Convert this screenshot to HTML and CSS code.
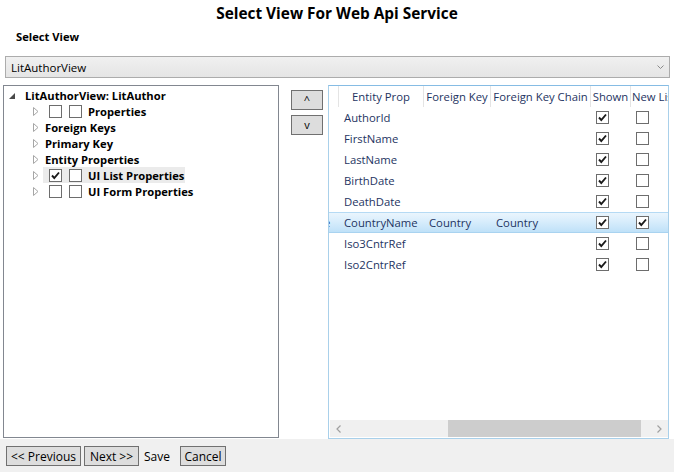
FILE: index.html
```html
<!DOCTYPE html>
<html>
<head>
<meta charset="utf-8">
<title>Select View For Web Api Service</title>
<link rel="stylesheet" href="styles.css">
</head>
<body>
<div class="app">
  <h1 class="title">Select View For Web Api Service</h1>
  <div class="section-label">Select View</div>
  <div class="combo">
    <span class="combo-text">LitAuthorView</span>
    <svg class="combo-arrow" width="7" height="4" viewBox="0 0 7 4"><polyline points="0.5,0.5 3.5,3.5 6.5,0.5" fill="none" stroke="#8a8a8a" stroke-width="1"/></svg>
  </div>
  <div class="main">
    <div class="tree">
      <div class="tree-row root">
        <span class="exp"><svg width="6" height="6" viewBox="0 0 6 6"><polygon points="6,0 6,6 0,6" fill="#4a4a4a"/></svg></span>
        <span class="node">LitAuthorView: LitAuthor</span>
      </div>
      <div class="tree-row child">
        <span class="exp"><svg width="6" height="9" viewBox="0 0 6 9"><polygon points="0.5,0.5 5,4.5 0.5,8.5" fill="none" stroke="#a6a6a6" stroke-width="1"/></svg></span>
        <span class="node"><span class="cb"></span><span class="cb"></span><span class="node-text">Properties</span></span>
      </div>
      <div class="tree-row child">
        <span class="exp"><svg width="6" height="9" viewBox="0 0 6 9"><polygon points="0.5,0.5 5,4.5 0.5,8.5" fill="none" stroke="#a6a6a6" stroke-width="1"/></svg></span>
        <span class="node">Foreign Keys</span>
      </div>
      <div class="tree-row child">
        <span class="exp"><svg width="6" height="9" viewBox="0 0 6 9"><polygon points="0.5,0.5 5,4.5 0.5,8.5" fill="none" stroke="#a6a6a6" stroke-width="1"/></svg></span>
        <span class="node">Primary Key</span>
      </div>
      <div class="tree-row child">
        <span class="exp"><svg width="6" height="9" viewBox="0 0 6 9"><polygon points="0.5,0.5 5,4.5 0.5,8.5" fill="none" stroke="#a6a6a6" stroke-width="1"/></svg></span>
        <span class="node">Entity Properties</span>
      </div>
      <div class="tree-row child">
        <span class="exp"><svg width="6" height="9" viewBox="0 0 6 9"><polygon points="0.5,0.5 5,4.5 0.5,8.5" fill="none" stroke="#a6a6a6" stroke-width="1"/></svg></span>
        <span class="node hover"><span class="cb checked"><svg width="11" height="11" viewBox="0 0 11 11"><polyline points="2,5.5 4.3,8 9,2.5" fill="none" stroke="#1a1a1a" stroke-width="1.9"/></svg></span><span class="cb"></span><span class="node-text">UI List Properties</span></span>
      </div>
      <div class="tree-row child">
        <span class="exp"><svg width="6" height="9" viewBox="0 0 6 9"><polygon points="0.5,0.5 5,4.5 0.5,8.5" fill="none" stroke="#a6a6a6" stroke-width="1"/></svg></span>
        <span class="node"><span class="cb"></span><span class="cb"></span><span class="node-text">UI Form Properties</span></span>
      </div>
    </div>
    <div class="movers">
      <button class="btn mover">^</button>
      <button class="btn mover">v</button>
    </div>
    <div class="grid">
      <div class="grid-head">
        <div class="rh"></div>
        <div class="hc c1">Entity Prop</div>
        <div class="hc c2">Foreign Key</div>
        <div class="hc c3">Foreign Key Chain</div>
        <div class="hc c4">Shown</div>
        <div class="hc c5">New List</div>
      </div>
      <div class="grid-body">
        <div class="grow"><div class="rh"></div><div class="gc c1">AuthorId</div><div class="gc c2"></div><div class="gc c3"></div><div class="gc c4"><span class="cb checked"><svg width="11" height="11" viewBox="0 0 11 11"><polyline points="2,5.5 4.3,8 9,2.5" fill="none" stroke="#1a1a1a" stroke-width="1.9"/></svg></span></div><div class="gc c5"><span class="cb"></span></div></div>
        <div class="grow"><div class="rh"></div><div class="gc c1">FirstName</div><div class="gc c2"></div><div class="gc c3"></div><div class="gc c4"><span class="cb checked"><svg width="11" height="11" viewBox="0 0 11 11"><polyline points="2,5.5 4.3,8 9,2.5" fill="none" stroke="#1a1a1a" stroke-width="1.9"/></svg></span></div><div class="gc c5"><span class="cb"></span></div></div>
        <div class="grow"><div class="rh"></div><div class="gc c1">LastName</div><div class="gc c2"></div><div class="gc c3"></div><div class="gc c4"><span class="cb checked"><svg width="11" height="11" viewBox="0 0 11 11"><polyline points="2,5.5 4.3,8 9,2.5" fill="none" stroke="#1a1a1a" stroke-width="1.9"/></svg></span></div><div class="gc c5"><span class="cb"></span></div></div>
        <div class="grow"><div class="rh"></div><div class="gc c1">BirthDate</div><div class="gc c2"></div><div class="gc c3"></div><div class="gc c4"><span class="cb checked"><svg width="11" height="11" viewBox="0 0 11 11"><polyline points="2,5.5 4.3,8 9,2.5" fill="none" stroke="#1a1a1a" stroke-width="1.9"/></svg></span></div><div class="gc c5"><span class="cb"></span></div></div>
        <div class="grow"><div class="rh"></div><div class="gc c1">DeathDate</div><div class="gc c2"></div><div class="gc c3"></div><div class="gc c4"><span class="cb checked"><svg width="11" height="11" viewBox="0 0 11 11"><polyline points="2,5.5 4.3,8 9,2.5" fill="none" stroke="#1a1a1a" stroke-width="1.9"/></svg></span></div><div class="gc c5"><span class="cb"></span></div></div>
        <div class="grow selected"><div class="rh"><span class="rh-mark">e</span></div><div class="gc c1">CountryName</div><div class="gc c2">Country</div><div class="gc c3">Country</div><div class="gc c4"><span class="cb checked"><svg width="11" height="11" viewBox="0 0 11 11"><polyline points="2,5.5 4.3,8 9,2.5" fill="none" stroke="#1a1a1a" stroke-width="1.9"/></svg></span></div><div class="gc c5"><span class="cb checked"><svg width="11" height="11" viewBox="0 0 11 11"><polyline points="2,5.5 4.3,8 9,2.5" fill="none" stroke="#1a1a1a" stroke-width="1.9"/></svg></span></div></div>
        <div class="grow"><div class="rh"></div><div class="gc c1">Iso3CntrRef</div><div class="gc c2"></div><div class="gc c3"></div><div class="gc c4"><span class="cb checked"><svg width="11" height="11" viewBox="0 0 11 11"><polyline points="2,5.5 4.3,8 9,2.5" fill="none" stroke="#1a1a1a" stroke-width="1.9"/></svg></span></div><div class="gc c5"><span class="cb"></span></div></div>
        <div class="grow"><div class="rh"></div><div class="gc c1">Iso2CntrRef</div><div class="gc c2"></div><div class="gc c3"></div><div class="gc c4"><span class="cb checked"><svg width="11" height="11" viewBox="0 0 11 11"><polyline points="2,5.5 4.3,8 9,2.5" fill="none" stroke="#1a1a1a" stroke-width="1.9"/></svg></span></div><div class="gc c5"><span class="cb"></span></div></div>
      </div>
      <div class="hscroll">
        <span class="sb-btn"><svg width="5" height="8" viewBox="0 0 5 8"><polyline points="4.5,0.5 1,4 4.5,7.5" fill="none" stroke="#a0a0a0" stroke-width="1.2"/></svg></span>
        <span class="sb-track"><span class="sb-thumb"></span></span>
        <span class="sb-btn"><svg width="5" height="8" viewBox="0 0 5 8"><polyline points="0.5,0.5 4,4 0.5,7.5" fill="none" stroke="#a0a0a0" stroke-width="1.2"/></svg></span>
      </div>
    </div>
  </div>
  <div class="footer">
    <button class="btn fbtn prev">&lt;&lt; Previous</button>
    <button class="btn fbtn next">Next &gt;&gt;</button>
    <span class="save">Save</span>
    <button class="btn fbtn cancel">Cancel</button>
  </div>
</div>
</body>
</html>
```

FILE: styles.css
```css
* { box-sizing: border-box; }
html, body { margin: 0; padding: 0; }
body {
  font-family: "Open Sans", "Noto Sans", sans-serif;
  font-size: 11.5px;
  color: #000;
  background: #fff;
}
.app {
  width: 674px;
  height: 472px;
  display: flex;
  flex-direction: column;
  overflow: hidden;
}
.title {
  margin: 0;
  height: 29px;
  line-height: 28px;
  font-size: 15.4px;
  font-weight: 700;
  text-align: center;
}
.section-label {
  height: 16px;
  line-height: 16px;
  font-size: 11.2px;
  font-weight: 700;
  padding-left: 16px;
}
.combo {
  margin: 11px 4px 0 5px;
  height: 22px;
  border: 1px solid #acacac;
  background: linear-gradient(#f0f0f0, #e5e5e5);
  display: flex;
  align-items: center;
  justify-content: space-between;
  padding: 0 5px 0 5px;
}
.combo-arrow { display: block; }
.main {
  margin-top: 7px;
  height: 354px;
  display: flex;
}
.tree {
  margin-left: 3px;
  width: 276px;
  height: 353px;
  border: 1px solid #828790;
  padding-top: 1px;
  font-size: 11.2px;
  font-weight: 700;
}
.tree-row {
  height: 16px;
  display: flex;
  align-items: center;
}
.tree-row.root { padding-left: 5px; }
.tree-row.root .exp { width: 14px; padding-top: 1px; }
.tree-row.child { padding-left: 29px; }
.tree-row.child .exp { width: 10px; }
.exp { display: flex; align-items: center; }
.exp svg { display: block; }
.node {
  display: flex;
  align-items: center;
  height: 16px;
  padding: 0 1px 0 2px;
  white-space: nowrap;
}
.node.hover { background: #ebebeb; }
.node .cb { margin-left: 4px; }
.node .cb + .cb { margin-left: 7px; }
.node-text { margin-left: 6px; }
.cb {
  width: 13px;
  height: 13px;
  border: 1px solid #6d6d6d;
  background: #fff;
  display: inline-flex;
  align-items: center;
  justify-content: center;
  flex: none;
}
.cb svg { display: block; }
.movers {
  margin-left: 12px;
  width: 32px;
  padding-top: 5px;
  display: flex;
  flex-direction: column;
  gap: 5px;
}
.btn {
  font-family: inherit;
  font-size: 12px;
  color: #000;
  background: #dddddd;
  border: 1px solid #707070;
  border-radius: 0;
  padding: 0;
  margin: 0;
}
.mover {
  width: 32px;
  height: 20px;
  font-size: 11px;
  line-height: 16px;
}
.grid {
  margin-left: 5px;
  width: 341px;
  height: 354px;
  border: 1px solid #a9d0ea;
  border-top-color: #86bce4;
  display: flex;
  flex-direction: column;
  overflow: hidden;
  color: #1e3462;
  font-size: 11.3px;
}
.grid-head, .grow {
  display: flex;
  height: 21px;
  flex: none;
}
.grid-body { flex: 1; }
.rh { width: 9px; flex: none; overflow: hidden; }
.rh-mark { display: inline-block; margin-left: -5px; line-height: 19px; }
.hc, .gc {
  flex: none;
  border-left: 1px solid transparent;
  display: flex;
  align-items: center;
  white-space: nowrap;
  overflow: hidden;
}
.hc {
  border-left-color: #e4e4e4;
  justify-content: center;
}
.gc { padding-left: 5px; }
.c1 { width: 85px; }
.c2 { width: 67px; }
.c3 { width: 100px; }
.c4 { width: 40px; }
.c5 { width: 60px; }
.hc.c5 { justify-content: flex-start; padding-left: 1px; }
.grow.selected {
  background: linear-gradient(#eaf5fd 0%, #d8edfc 45%, #bfe1f8 100%);
  border-top: 1px solid #b5daf4;
  border-bottom: 1px solid #a9d3f0;
}
.hscroll {
  flex: none;
  height: 17px;
  margin: 0 0 1px 1px;
  background: #f0f0f0;
  display: flex;
}
.sb-btn {
  width: 17px;
  display: flex;
  align-items: center;
  justify-content: center;
}
.sb-track { flex: 1; display: flex; }
.sb-thumb {
  margin-left: 101px;
  width: 193px;
  background: #cdcdcd;
}
.footer {
  flex: 1;
  background: #f0f0f0;
  display: flex;
  align-items: flex-start;
  padding: 7px 0 0 6px;
}
.fbtn { height: 20px; line-height: 17px; }
.prev { width: 75px; }
.next { width: 55px; margin-left: 3px; }
.save { margin-left: 5px; font-size: 12px; line-height: 21px; }
.cancel { width: 46px; margin-left: 10px; }
```
